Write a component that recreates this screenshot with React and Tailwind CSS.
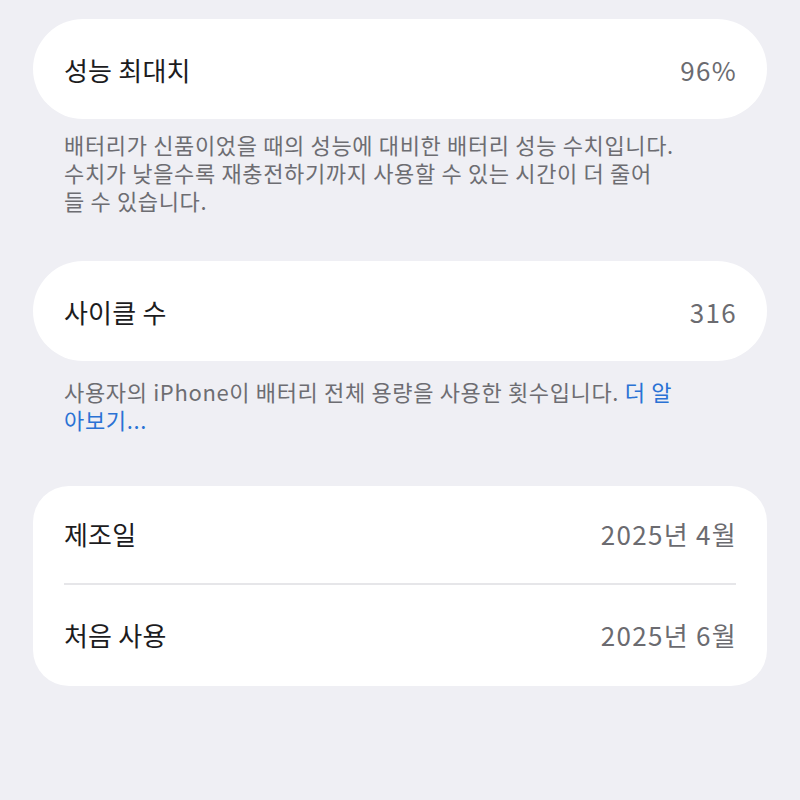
import React from 'react';

const font = { fontFamily: '"Noto Sans CJK KR", "Noto Sans", sans-serif' };

function Row({ label, value }) {
  return (
    <div className="flex items-center justify-between h-[100px]">
      <span className="text-[26px] text-[#1c1c1e] tracking-[0.2px]">{label}</span>
      <span className="text-[26px] text-[#6b6b70] tracking-[1.3px] -mr-[1px]">{value}</span>
    </div>
  );
}

export default function App() {
  return (
    <div className="w-[800px] h-[800px] bg-[#efeff4] pt-[19px] px-[33px]" style={font}>
      <div className="bg-white rounded-[50px] px-[31px]">
        <Row label="성능 최대치" value="96%" />
      </div>
      <p className="mt-[11px] px-[31px] text-[22px] leading-[28px] tracking-[0.65px] text-[#6d6d72]">
        배터리가 신품이었을 때의 성능에 대비한 배터리 성능 수치입니다.
        <br />
        수치가 낮을수록 재충전하기까지 사용할 수 있는 시간이 더 줄어
        <br />들 수 있습니다.
      </p>

      <div className="mt-[47px] bg-white rounded-[50px] px-[31px]">
        <Row label="사이클 수" value="316" />
      </div>
      <p className="mt-[16px] px-[31px] text-[22px] leading-[28px] tracking-[0.65px] text-[#6d6d72]">
        사용자의 iPhone이 배터리 전체 용량을 사용한 횟수입니다.{' '}
        <span className="text-[#2a72d4]">더 알</span>
        <br />
        <span className="text-[#2a72d4]">아보기...</span>
      </p>

      <div className="mt-[53px] bg-white rounded-[36px] px-[31px]">
        <div className="flex items-center justify-between h-[97px] pb-[2px]">
          <span className="text-[26px] text-[#1c1c1e] tracking-[0.2px]">제조일</span>
          <span className="text-[26px] text-[#6b6b70] tracking-[1.3px] -mr-[1px]">2025년 4월</span>
        </div>
        <div className="h-[2px] bg-[#e6e6e9]" />
        <div className="flex items-center justify-between h-[101px] pb-[3px]">
          <span className="text-[26px] text-[#1c1c1e] tracking-[0.2px]">처음 사용</span>
          <span className="text-[26px] text-[#6b6b70] tracking-[1.3px] -mr-[1px]">2025년 6월</span>
        </div>
      </div>
    </div>
  );
}
